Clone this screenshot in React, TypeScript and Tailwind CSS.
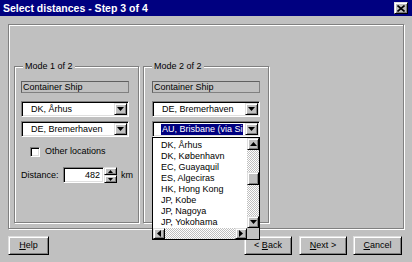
import React from "react";

const raised =
  "border border-t-[#dfdfdf] border-l-[#dfdfdf] border-r-black border-b-black shadow-[inset_1px_1px_0_#fff,inset_-1px_-1px_0_#808080] bg-[#c0c0c0]";
const sunken =
  "border border-t-[#808080] border-l-[#808080] border-r-white border-b-white shadow-[inset_1px_1px_0_#000,inset_-1px_-1px_0_#dfdfdf]";
const etched = "border border-[#808080] shadow-[inset_1px_1px_0_#fff,1px_1px_0_#fff]";
const checker =
  "bg-[repeating-conic-gradient(#c0c0c0_0_25%,#ffffff_0_50%)] bg-[length:2px_2px]";

type Dir = "up" | "down" | "left" | "right";

function Tri({ dir, size = 7 }: { dir: Dir; size?: number }) {
  const h = Math.ceil(size / 2);
  const pts: Record<Dir, string> = {
    down: `0,0 ${size},0 ${size / 2},${h}`,
    up: `0,${h} ${size},${h} ${size / 2},0`,
    left: `${h},0 ${h},${size} 0,${size / 2}`,
    right: `0,0 0,${size} ${h},${size / 2}`,
  };
  const vert = dir === "up" || dir === "down";
  return (
    <svg
      width={vert ? size : h}
      height={vert ? h : size}
      viewBox={`0 0 ${vert ? size : h} ${vert ? h : size}`}
      className="block"
    >
      <polygon points={pts[dir]} fill="#000" />
    </svg>
  );
}

function Combo({ text, selected }: { text: string; selected?: boolean }) {
  return (
    <div className={`${sunken} bg-white h-[16px] w-[108px] p-[1px] flex items-stretch`}>
      <div className="flex-1 flex items-center pl-[7px] pr-[2px] min-w-0">
        <div className="overflow-hidden whitespace-nowrap flex-1 flex">
          {selected ? (
            <span className="bg-[#000080] text-white px-[1px] leading-[11px]">{text}</span>
          ) : (
            <span className="px-[1px] leading-[11px]">{text}</span>
          )}
        </div>
      </div>
      <div className={`${raised} w-[13px] flex items-center justify-center`}>
        <Tri dir="down" />
      </div>
    </div>
  );
}

function Field({ text }: { text: string }) {
  return (
    <div className="h-[12px] w-[108px] border border-[#808080] border-t-[#606060] border-l-[#606060] flex items-center pl-[1px] leading-[10px] text-black">
      {text}
    </div>
  );
}

function Button({ children, w }: { children: React.ReactNode; w: string }) {
  return (
    <div
      className={`${raised} ${w} h-[19px] flex items-center justify-center whitespace-pre`}
    >
      {children}
    </div>
  );
}

const items = [
  "DK, Århus",
  "DK, København",
  "EC, Guayaquil",
  "ES, Algeciras",
  "HK, Hong Kong",
  "JP, Kobe",
  "JP, Nagoya",
  "JP, Yokohama",
];

function DropList() {
  return (
    <div className="absolute left-0 top-full w-[108px] h-[103px] bg-white border border-black flex flex-col z-10">
      <div className="flex flex-1 min-h-0">
        <div className="flex-1 pt-[2px] pl-[8px] flex flex-col overflow-hidden">
          {items.map((i) => (
            <div key={i} className="h-[11px] leading-[11px] whitespace-nowrap">
              {i}
            </div>
          ))}
        </div>
        <div className="w-[12px] flex flex-col">
          <div className={`${raised} h-[12px] flex items-center justify-center`}>
            <Tri dir="up" />
          </div>
          <div className={`flex-1 flex flex-col ${checker}`}>
            <div className="h-[22px]" />
            <div className={`${raised} h-[13px]`} />
          </div>
          <div className={`${raised} h-[12px] flex items-center justify-center`}>
            <Tri dir="down" />
          </div>
        </div>
      </div>
      <div className="h-[11px] flex">
        <div className={`${raised} w-[12px] flex items-center justify-center`}>
          <Tri dir="left" />
        </div>
        <div className={`flex-1 ${checker}`} />
        <div className={`${raised} w-[12px] flex items-center justify-center`}>
          <Tri dir="right" />
        </div>
        <div className="w-[12px] bg-[#c0c0c0]" />
      </div>
    </div>
  );
}

function Group({
  label,
  w,
  pl,
  children,
}: {
  label: string;
  w: string;
  pl: string;
  children: React.ReactNode;
}) {
  return (
    <div className={`relative ${etched} ${w} h-[157px] ${pl} pt-[14px] flex flex-col`}>
      <span className="absolute -top-[6px] left-[8px] bg-[#c0c0c0] px-[2px] leading-[11px]">
        {label}
      </span>
      {children}
    </div>
  );
}

export default function App() {
  return (
    <div className="w-[412px] h-[262px] bg-[#c0c0c0] flex flex-col text-[9px] text-black font-['Liberation_Sans',Arial,sans-serif] overflow-hidden">
      {/* Title bar */}
      <div className="h-[16px] bg-[#000080] flex items-center justify-between pl-[3px] pr-[4px] shrink-0">
        <span className="text-white font-bold text-[10.5px] leading-none">
          Select distances - Step 3 of 4
        </span>
        <div className={`${raised} w-[14px] h-[12px] flex items-center justify-center`}>
          <svg width="8" height="7" viewBox="0 0 8 7" className="block">
            <path d="M0.5 0.5 L7.5 6.5 M7.5 0.5 L0.5 6.5" stroke="#000" strokeWidth="1.6" />
          </svg>
        </div>
      </div>

      {/* Main etched panel */}
      <div className={`mt-[8px] ml-[8px] w-[396px] h-[205px] shrink-0 ${etched}`}>
        <div className="flex gap-[4px] pl-[5px] pt-[41px]">
          <Group label="Mode 1 of 2" w="w-[125px]" pl="pl-[6px]">
            <Field text="Container Ship" />
            <div className="mt-[8px]">
              <Combo text="DK, Århus" />
            </div>
            <div className="mt-[4px]">
              <Combo text="DE, Bremerhaven" />
            </div>
            <div className="mt-[10px] flex items-center pl-[9px] h-[9px]">
              <div className={`${sunken} bg-white w-[10px] h-[10px]`} />
              <span className="ml-[5px] leading-[11px]">Other locations</span>
            </div>
            <div className="mt-[11px] flex items-center h-[16px]">
              <span className="w-[42px] leading-[11px]">Distance:</span>
              <div className={`${sunken} bg-white w-[41px] h-[16px] flex items-center justify-end pr-[3px] leading-[11px]`}>
                482
              </div>
              <div className="w-[13px] h-[16px] flex flex-col">
                <div className={`${raised} h-[8px] flex items-center justify-center`}>
                  <Tri dir="up" size={5} />
                </div>
                <div className={`${raised} h-[8px] flex items-center justify-center`}>
                  <Tri dir="down" size={5} />
                </div>
              </div>
              <span className="ml-[4px] leading-[11px]">km</span>
            </div>
          </Group>

          <Group label="Mode 2 of 2" w="w-[126px]" pl="pl-[8px]">
            <Field text="Container Ship" />
            <div className="mt-[8px]">
              <Combo text="DE, Bremerhaven" />
            </div>
            <div className="mt-[4px] relative">
              <Combo text="AU, Brisbane (via Singapore)" selected />
              <DropList />
            </div>
          </Group>
        </div>
      </div>

      {/* Buttons row */}
      <div className="mt-[7px] flex pl-[8px] pr-[10px]">
        <Button w="w-[41px]">
          <span>
            <span className="underline">H</span>elp
          </span>
        </Button>
        <div className="ml-auto flex gap-[6px]">
          <Button w="w-[48px]">
            <span>
              {"< "}
              <span className="underline">B</span>ack
            </span>
          </Button>
          <div className="ml-[1px]">
            <Button w="w-[48px]">
              <span>
                <span className="underline">N</span>ext {">"}
              </span>
            </Button>
          </div>
          <Button w="w-[49px]">
            <span>
              <span className="underline">C</span>ancel
            </span>
          </Button>
        </div>
      </div>
    </div>
  );
}
